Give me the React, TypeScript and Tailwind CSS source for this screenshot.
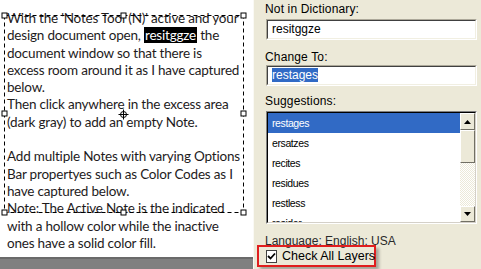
import React from "react";

const leftLines: React.ReactNode[] = [
  "With the 'Notes Tool (N)' active and your",
  <>design document open, <span className="bg-black text-white px-[1px]">resitggze</span> the</>,
  "document window so that there is",
  "excess room around it as I have captured",
  "below.",
  "Then click anywhere in the excess area",
  "(dark gray) to add an empty Note.",
  "\u00a0",
  "Add multiple Notes with varying Options",
  "Bar propertyes such as Color Codes as I",
  "have captured below.",
  "Note: The Active Note is the indicated",
  "with a hollow color while the inactive",
  "ones have a solid color fill.",
];

const suggestions = ["restages", "ersatzes", "recites", "residues", "restless", "resider"];

function Handle({ x, y }: { x: number; y: number }) {
  return <rect x={x - 2.5} y={y - 2.5} width={5} height={5} fill="white" stroke="black" strokeWidth={1} />;
}

function SunkenBox({ className, children }: { className?: string; children?: React.ReactNode }) {
  return (
    <div className={"border border-t-[#aca899] border-l-[#aca899] border-b-white border-r-white " + (className ?? "")}>
      <div className="h-full w-full border border-t-[#404040] border-l-[#404040] border-b-[#f1efe2] border-r-[#f1efe2] bg-white">
        {children}
      </div>
    </div>
  );
}

export default function App() {
  const handles = [
    [4.5, 15.5], [123.5, 15.5], [243.5, 15.5],
    [4.5, 113.5], [243.5, 113.5],
    [4.5, 212.5], [123.5, 212.5], [243.5, 212.5],
  ];
  return (
    <div className="w-[481px] h-[269px] flex overflow-hidden bg-[#ece9d8]">
      {/* Left document panel */}
      <div className="w-[253px] h-full flex flex-col bg-white relative">
        <div
          className="flex-1 pl-[7px] pt-[10px] text-[#1e1b1c] text-[13.5px] leading-[17.3px] tracking-[-0.2px]"
          style={{ fontFamily: "Lato, 'Open Sans', sans-serif" }}
        >
          {leftLines.map((l, i) => (
            <div key={i} className="whitespace-nowrap">{l}</div>
          ))}
        </div>
        <div className="h-[12px] bg-[#808080] border-t-2 border-[#6a6a6a]" />
        <svg className="absolute left-0 top-0 pointer-events-none" width="253" height="230">
          <rect x={4.5} y={15.5} width={239} height={197} fill="none" stroke="black" strokeWidth={1} strokeDasharray="4 3" />
          {handles.map(([x, y], i) => (
            <Handle key={i} x={x} y={y} />
          ))}
          <circle cx={123.5} cy={114.5} r={3} fill="none" stroke="black" strokeWidth={1} />
          <line x1={118.5} y1={114.5} x2={128.5} y2={114.5} stroke="black" strokeWidth={1} />
          <line x1={123.5} y1={109.5} x2={123.5} y2={119.5} stroke="black" strokeWidth={1} />
        </svg>
      </div>

      {/* Right spell-check panel */}
      <div
        className="flex-1 h-full flex flex-col border-l border-[#faf9f4] pl-[11px] text-[12px] text-black"
        style={{ fontFamily: "'Liberation Sans', Arial, sans-serif" }}
      >
        <div className="h-[19px] leading-[19px] tracking-[0.15px]">Not in Dictionary:</div>
        <SunkenBox className="w-[211px] h-[21px] ml-[1px]">
          <div className="pl-[4px] leading-[17px] text-[12px]">resitggze</div>
        </SunkenBox>
        <div className="h-[25px] pt-[10px] leading-[14px] tracking-[0.15px]">Change To:</div>
        <SunkenBox className="w-[211px] h-[21px] ml-[1px]">
          <div className="pl-[4px] pt-[1px] leading-[15px] text-[12px]">
            <span className="bg-[#316ac5] text-white">restages</span>
          </div>
        </SunkenBox>
        <div className="h-[25px] pt-[8px] leading-[14px] tracking-[0.15px]">Suggestions:</div>
        <div className="w-[211px] h-[113px] ml-[1px] border border-t-[#808080] border-l-[#808080] border-b-white border-r-white">
          <div className="h-full w-full border border-t-black border-l-black border-b-[#d4d0c8] border-r-[#d4d0c8] bg-white flex overflow-hidden">
            <div className="flex-1 overflow-hidden">
              {suggestions.map((s, i) => (
                <div
                  key={s}
                  className={
                    "h-[20px] leading-[20px] pl-[4px] text-[10.5px] tracking-[-0.4px] " +
                    (i === 0 ? "bg-[#316ac5] text-white" : "text-black")
                  }
                >
                  {s}
                </div>
              ))}
            </div>
            <div className="w-[15px] h-full flex flex-col bg-[#ece9d8]">
              <div className="h-[17px] border border-t-white border-l-white border-b-[#716f64] border-r-[#716f64] bg-[#ece9d8] flex items-center justify-center">
                <svg width="7" height="4"><polygon points="3.5,0 7,4 0,4" fill="black" /></svg>
              </div>
              <div className="h-[33px] border border-t-white border-l-white border-b-[#716f64] border-r-[#716f64] bg-[#ece9d8]" />
              <div
                className="flex-1"
                style={{
                  backgroundImage:
                    "repeating-conic-gradient(#ece9d8 0% 25%, #ffffff 0% 50%)",
                  backgroundSize: "2px 2px",
                }}
              />
              <div className="h-[16px] border border-t-white border-l-white border-b-[#716f64] border-r-[#716f64] bg-[#ece9d8] flex items-center justify-center">
                <svg width="7" height="4"><polygon points="0,0 7,0 3.5,4" fill="black" /></svg>
              </div>
            </div>
          </div>
        </div>
        <div className="h-[21px] pt-[10px] leading-[14px] text-[#2a2a2a]">Language: English: USA</div>
        <div className="ml-[-8px] w-[119px] h-[22px] border-2 border-[#e01e1e] flex items-center pl-[7px] gap-[5px] shadow-[3px_3px_3px_rgba(0,0,0,0.3)]">
          <div className="w-[13px] h-[13px] bg-white border border-[#404040] flex items-center justify-center">
            <svg width="9" height="9" viewBox="0 0 9 9">
              <path d="M1 4 L3.5 6.5 L8 1.5" fill="none" stroke="black" strokeWidth="1.8" />
            </svg>
          </div>
          <span className="text-[12.5px] leading-[14px] whitespace-nowrap">Check All Layers</span>
        </div>
      </div>
    </div>
  );
}
